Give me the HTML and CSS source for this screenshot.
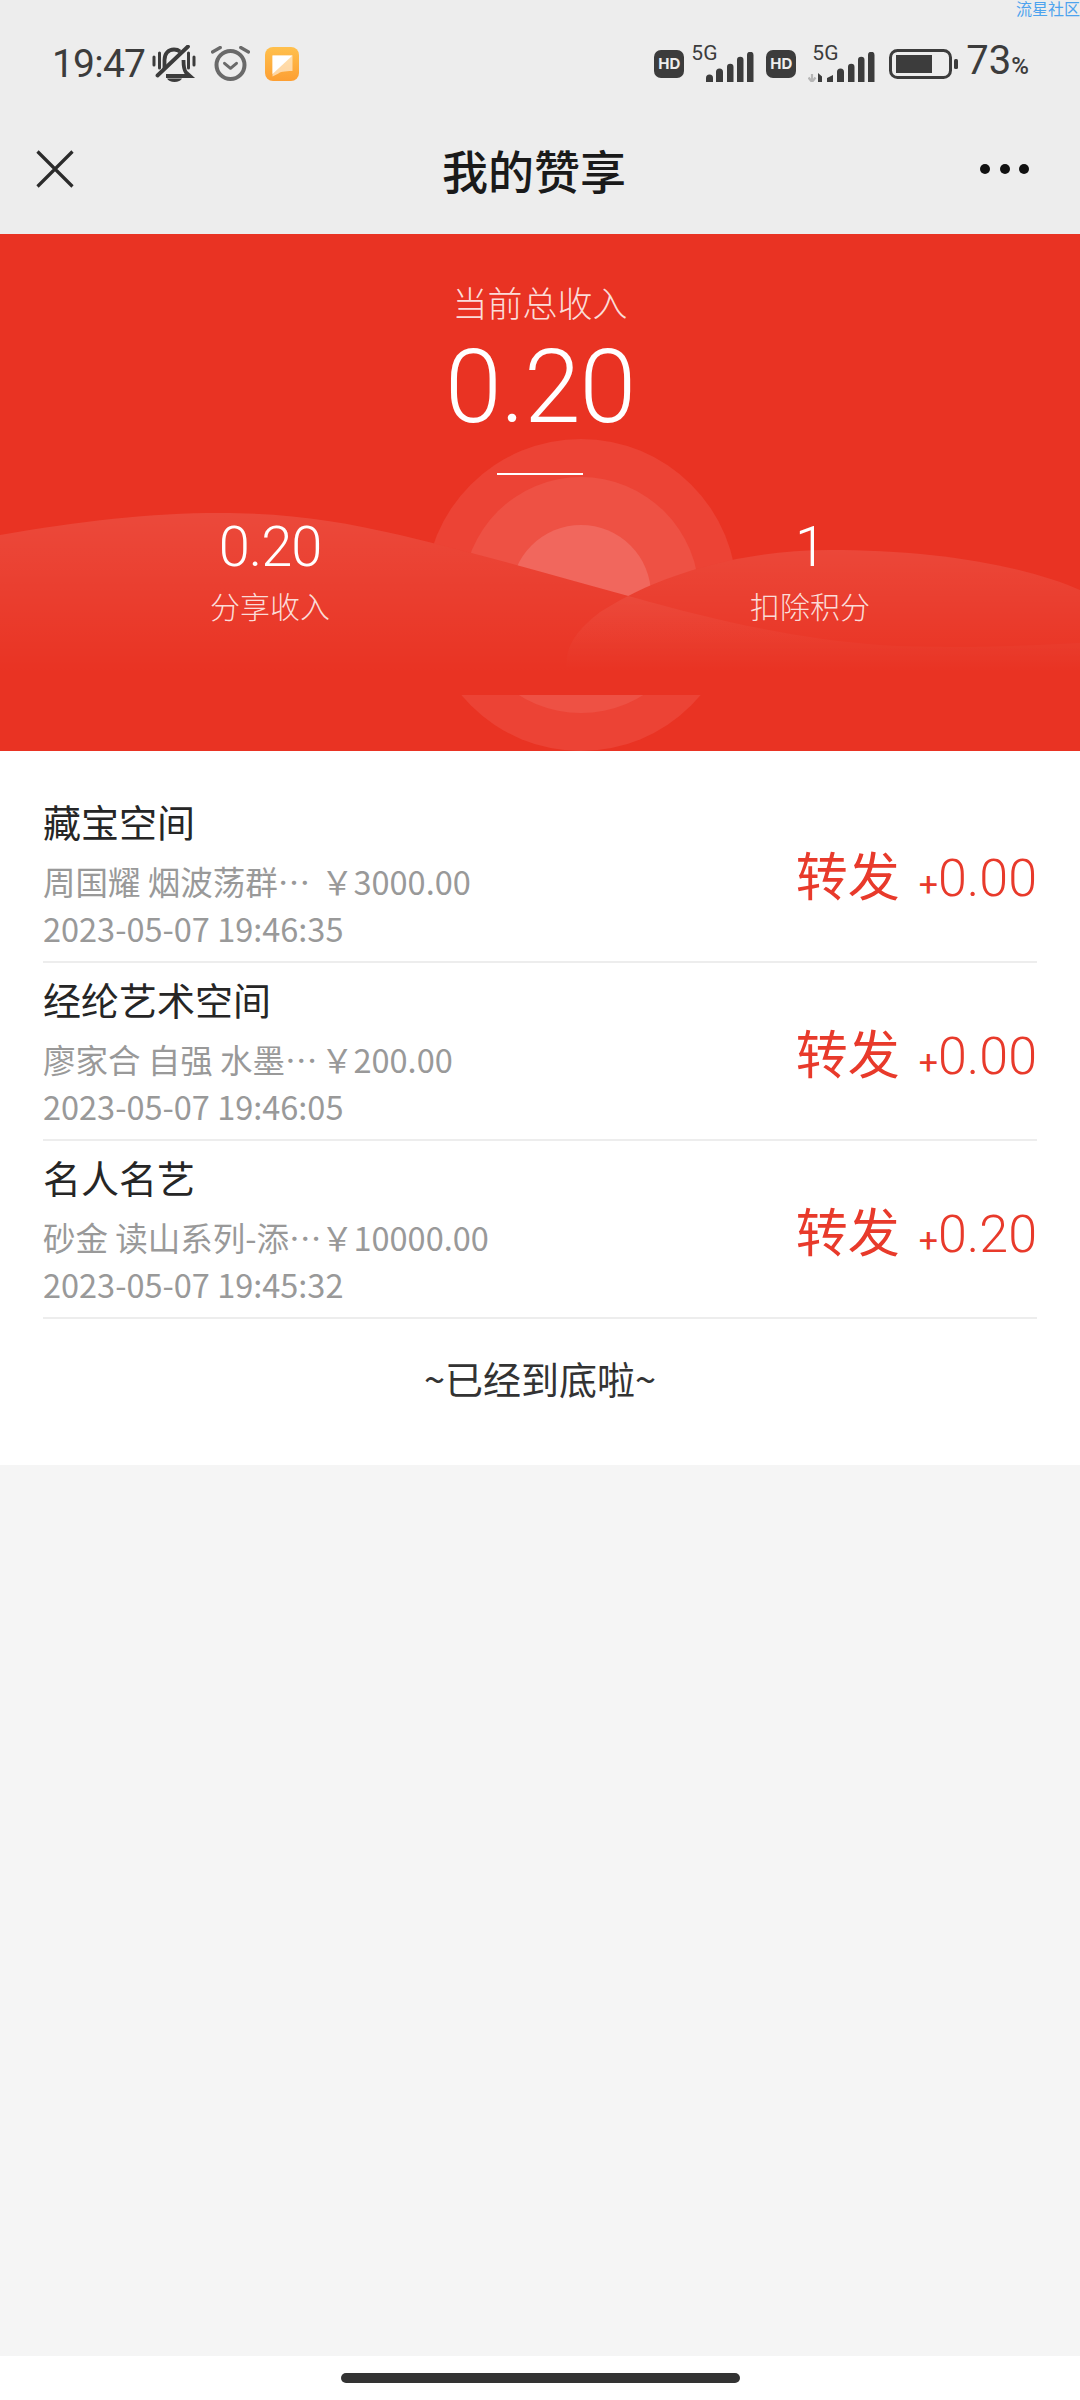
FILE: index.html
```html
<!DOCTYPE html>
<html lang="zh-CN">
<head>
<meta charset="utf-8">
<title>我的赞享</title>
<link rel="stylesheet" href="styles.css">
</head>
<body>
<div class="phone">
  <div class="top">
    <div class="watermark">流星社区</div>
    <div class="status">
      <div class="status-left">
        <span class="clock">19:47</span>
        <svg class="ic-bell" viewBox="0 0 44 37"><path d="M2 12v8M7.500 8v15M36.500 8v15M42 12v8" fill="none" stroke="#3c3c3c" stroke-width="3" stroke-linecap="round"/><path d="M12.500 24V15C12.500 9 16 4.500 22 4.500c2.500 0 4.500 .7 6 2M31.500 15c0 5 .5 10 2.500 12.500l4 3.500H14" fill="none" stroke="#3c3c3c" stroke-width="3.800"/><path d="M15 33.500h15c-1 2-4 3.500-7.500 3.500S16 35.500 15 33.500z" fill="#3c3c3c"/><path d="M5.500 30.500 36 1.500" stroke="#3c3c3c" stroke-width="3.800" stroke-linecap="round"/></svg>
        <svg class="ic-alarm" viewBox="0 0 39 35"><circle cx="19.500" cy="19" r="14" fill="none" stroke="#6a6a6a" stroke-width="4"/><path d="M13.500 17.300l6 5 6-5" fill="none" stroke="#6a6a6a" stroke-width="3" stroke-linecap="round" stroke-linejoin="round"/><path d="M1.500 6 9.300 1.500M37.500 6 29.700 1.500" stroke="#6a6a6a" stroke-width="3.200" stroke-linecap="round"/></svg>
        <svg class="ic-note" viewBox="0 0 34 34"><defs><linearGradient id="ng" x1="0" y1="0" x2="0" y2="1"><stop offset="0" stop-color="#ffc04d"/><stop offset="1" stop-color="#fd9f33"/></linearGradient></defs><rect width="34" height="34" rx="8" fill="url(#ng)"/><path d="M7.500 8.500h20v15.500c-8 0-13 1-14 2.500l-6 3z" fill="#fff" opacity=".55"/><path d="M7.500 8.500h20L7.500 27z" fill="#fff"/></svg>
      </div>
      <div class="status-right">
        <span class="hd">HD</span>
        <span class="net"><span class="fiveg">5G</span><svg class="bars" viewBox="0 0 48 30"><path d="M0 30v-4a3.500 3.500 0 0 1 7 0v4zM10 30V20a3.500 3.500 0 0 1 7 0v10zM21 30V15a3 3 0 0 1 6.500 0v15zM31 30V8a3 3 0 0 1 6.500 0v22zM41 30V3a3 3 0 0 1 6.500 0v27z" fill="#3c3c3c"/></svg></span>
        <span class="hd">HD</span>
        <span class="net net2"><span class="fiveg">5G</span><svg class="bars bars2" viewBox="0 0 67 30"><path d="M4 30V22M0.500 25.500 4 30l3.500-4.500" fill="none" stroke="#b5b5b5" stroke-width="2.200"/><path d="M10 21l4 3.500V30h-4z" fill="#3c3c3c"/><path d="M19 30v-4l6-3v7zM29 30V20a3.500 3.500 0 0 1 7 0v10zM40 30V15a3 3 0 0 1 6.500 0v15zM50 30V8a3 3 0 0 1 6.500 0v22zM60 30V3a3 3 0 0 1 6.500 0v27z" fill="#3c3c3c"/></svg></span>
        <svg class="ic-batt" viewBox="0 0 69 30"><rect x="1.500" y="1.500" width="60" height="27" rx="7" fill="none" stroke="#3c3c3c" stroke-width="3"/><rect x="7" y="6" width="36" height="18" fill="#3c3c3c"/><rect x="65" y="10" width="4" height="10" rx="1.500" fill="#3c3c3c"/></svg>
        <span class="pct">73<small>%</small></span>
      </div>
    </div>
    <div class="nav">
      <svg class="ic-close" viewBox="0 0 38 38"><path d="M1.500 1.500 36.500 36.500M36.500 1.500 1.500 36.500" stroke="#2b2b2b" stroke-width="3.200" fill="none"/></svg>
      <h1 class="nav-title">我的赞享</h1>
      <div class="dots"><i></i><i></i><i></i></div>
    </div>
  </div>

  <section class="hero">
    <svg class="hero-art" viewBox="0 0 1080 517" aria-hidden="true">
      <defs>
        <linearGradient id="w1" gradientUnits="userSpaceOnUse" x1="0" y1="279" x2="0" y2="440"><stop offset="0" stop-color="#fff" stop-opacity=".11"/><stop offset="1" stop-color="#fff" stop-opacity="0"/></linearGradient>
        <linearGradient id="w2" gradientUnits="userSpaceOnUse" x1="0" y1="316" x2="0" y2="436"><stop offset="0" stop-color="#fff" stop-opacity=".1"/><stop offset="1" stop-color="#fff" stop-opacity="0"/></linearGradient>
      </defs>
      <circle class="sun-a" cx="581" cy="361" r="156"/>
      <circle class="sun-b" cx="581" cy="361" r="118"/>
      <circle class="sun-c" cx="581" cy="361" r="70"/>
      <path class="wave-base" d="M0 301C80 287 150 279 220 279 290 279 340 287 400 301 480 320 560 343 632 363 720 388 800 405 880 411 950 415 1020 412 1080 409V461H0z"/>
      <path class="wave-base" d="M566 461V430C566 408 582 392 600 378 640 352 720 316 830 316 930 316 1020 330 1080 356V461z"/>
      <path fill="url(#w1)" d="M0 301C80 287 150 279 220 279 290 279 340 287 400 301 480 320 560 343 632 363 720 388 800 405 880 411 950 415 1020 412 1080 409V461H0z"/>
      <path fill="url(#w2)" d="M566 461V430C566 408 582 392 600 378 640 352 720 316 830 316 930 316 1020 330 1080 356V461z"/>
    </svg>
    <div class="hero-body">
      <div class="hero-label">当前总收入</div>
      <div class="hero-total">0.20</div>
      <div class="hero-rule"></div>
      <div class="hero-stats">
        <div class="stat"><div class="stat-num">0.20</div><div class="stat-label">分享收入</div></div>
        <div class="stat"><div class="stat-num">1</div><div class="stat-label">扣除积分</div></div>
      </div>
    </div>
  </section>

  <section class="list">
    <article class="row">
      <div class="row-main">
        <div class="row-title">藏宝空间</div>
        <div class="row-sub"><span class="row-name">周国耀 烟波荡群…</span><span>￥3000.00</span></div>
        <div class="row-time">2023-05-07 19:46:35</div>
      </div>
      <div class="row-side"><span class="row-kind">转发</span><span class="row-amt"><small>+</small>0.00</span></div>
    </article>
    <article class="row">
      <div class="row-main">
        <div class="row-title">经纶艺术空间</div>
        <div class="row-sub"><span class="row-name">廖家合 自强 水墨…</span><span>￥200.00</span></div>
        <div class="row-time">2023-05-07 19:46:05</div>
      </div>
      <div class="row-side"><span class="row-kind">转发</span><span class="row-amt"><small>+</small>0.00</span></div>
    </article>
    <article class="row">
      <div class="row-main">
        <div class="row-title">名人名艺</div>
        <div class="row-sub"><span class="row-name">砂金 读山系列-添…</span><span>￥10000.00</span></div>
        <div class="row-time">2023-05-07 19:45:32</div>
      </div>
      <div class="row-side"><span class="row-kind">转发</span><span class="row-amt"><small>+</small>0.20</span></div>
    </article>
    <div class="list-end">~已经到底啦~</div>
  </section>

  <div class="filler"></div>
  <div class="home"><div class="home-pill"></div></div>
</div>
</body>
</html>
```
FILE: styles.css
```css
* { box-sizing: border-box; }
html, body { margin: 0; padding: 0; }
body { width: 1080px; height: 2400px; overflow: hidden; font-family: "Noto Sans CJK SC", "Noto Sans", sans-serif; background: #f5f5f5; }
.phone { display: flex; flex-direction: column; height: 2400px; }

.top { position: relative; height: 234px; background: #ededed; flex: none; }
.watermark { position: absolute; top: 0; right: 0; font-size: 16px; line-height: 16px; color: #4da3ee; }
.status { display: flex; justify-content: space-between; align-items: center; height: 127px; padding: 0 51px 0 52px; }
.status-left, .status-right { display: flex; align-items: center; }
.clock { font-family: "Roboto", sans-serif; font-size: 39px; font-weight: 400; letter-spacing: -0.800px; color: #3c3c3c; width: 100px; }
.ic-bell { width: 44px; height: 37px; }
.ic-alarm { width: 39px; height: 35px; margin-left: 15px; }
.ic-note { width: 34px; height: 34px; margin-left: 15px; }
.hd { width: 30px; height: 28px; border-radius: 7px; background: #3c3c3c; color: #eee; font: 700 15px/28px "Inter", sans-serif; text-align: center; }
.net { position: relative; display: block; width: 63px; height: 36px; margin: 0 12px 0 7px; }
.net2 { width: 67px; margin: 0 14px 0 12px; }
.fiveg { position: absolute; left: 0; top: -1px; font: 400 21px/16px "Roboto", sans-serif; color: #3c3c3c; }
.net2 .fiveg { left: 4px; }
.bars { position: absolute; right: 0; bottom: 0; width: 48px; height: 30px; }
.bars2 { width: 67px; }
.ic-batt { width: 69px; height: 30px; }
.pct { font-family: "Roboto", sans-serif; font-size: 40px; color: #3c3c3c; margin-left: 8px; line-height: 44px; font-weight: 400; white-space: nowrap; }
.pct small { font-size: 24px; font-weight: 500; }

.nav { display: flex; align-items: center; justify-content: space-between; height: 84px; padding: 0 51px 0 36px; position: relative; }
.ic-close { width: 38px; height: 38px; }
.nav-title { position: absolute; left: 0; right: 12px; top: 0; margin: 0; text-align: center; font-size: 46px; font-weight: 500; line-height: 84px; color: #1a1a1a; }
.dots { display: flex; gap: 9.500px; }
.dots i { width: 10px; height: 10px; border-radius: 50%; background: #111; display: block; }

.hero { position: relative; height: 517px; background: #e93323; flex: none; overflow: hidden; color: #fff; }
.hero-art { position: absolute; left: 0; top: 0; width: 1080px; height: 517px; }
.sun-a { fill: #ec4335; }
.sun-b { fill: #ee5144; }
.sun-c { fill: #f1675d; }
.wave-base { fill: #e93323; }
.hero-body { position: relative; display: flex; flex-direction: column; align-items: center; padding-top: 44px; }
.hero-label { font-size: 35px; line-height: 48px; font-weight: 300; color: #fbdcd8; }
.hero-total { font-family: "Roboto", sans-serif; font-weight: 300; font-size: 102px; letter-spacing: -1px; line-height: 112px; margin-top: 5px; }
.hero-rule { width: 86px; height: 2px; background: #fff; margin-top: 30px; }
.hero-stats { display: grid; grid-template-columns: 270px 270px; column-gap: 270px; margin-top: 41px; width: 810px; }
.stat { display: flex; flex-direction: column; align-items: center; }
.stat-num { font-family: "Roboto", sans-serif; font-weight: 300; font-size: 56px; line-height: 62px; letter-spacing: -1px; }
.stat-label { font-size: 30px; line-height: 42px; color: #fbdcd8; margin-top: 6px; font-weight: 300; }

.list { background: #fff; padding: 34px 43px 0; flex: none; height: 714px; }
.row { display: flex; justify-content: space-between; align-items: center; height: 178px; border-bottom: 2px solid #ededed; }
.row-main { display: flex; flex-direction: column; }
.row-title { font-size: 38px; line-height: 49px; color: #262626; }
.row-sub { display: flex; font-size: 32.500px; line-height: 46px; color: #999; margin-top: 13px; }
.row-time { font-size: 32.500px; line-height: 44px; color: #999; margin-top: 2px; }
.row-name { display: block; width: 278px; white-space: nowrap; }
.row-side { display: flex; align-items: baseline; color: #e83a2b; }
.row-kind { font-size: 52px; }
.row-amt { font-family: "Roboto", sans-serif; font-weight: 300; font-size: 52px; margin-left: 19px; }
.row-amt small { font-size: 34px; font-weight: 400; }
.list-end { text-align: center; font-size: 38px; line-height: 48px; color: #333; margin-top: 35px; }

.filler { flex: 1; }
.home { height: 44px; background: #fff; display: flex; justify-content: center; padding-top: 17px; flex: none; }
.home-pill { width: 399px; height: 10px; border-radius: 5px; background: #333; }
```
